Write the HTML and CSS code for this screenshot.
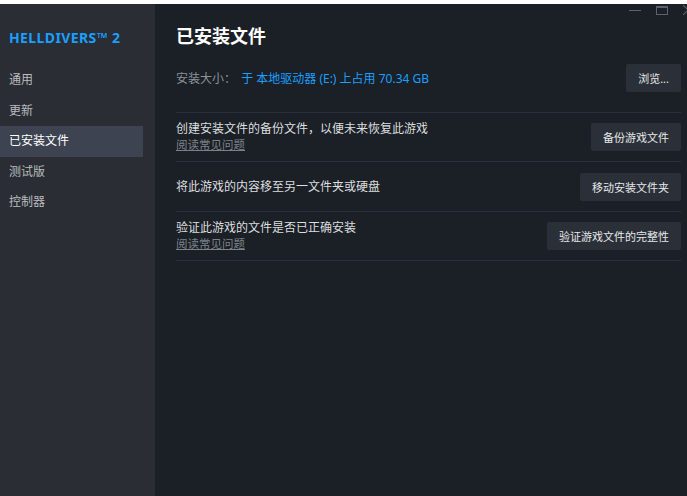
FILE: index.html
```html
<!DOCTYPE html>
<html lang="zh-CN">
<head>
    <meta charset="UTF-8">
    <title>HELLDIVERS™ 2 - 属性</title>
    <link rel="stylesheet" href="styles.css">
</head>
<body>
    <div class="topline"></div>
    <div class="window">
        <div class="sidebar">
            <h2 class="game-title">HELLDIVERS™ 2</h2>
            <ul class="nav">
                <li>通用</li>
                <li>更新</li>
                <li class="active">已安装文件</li>
                <li>测试版</li>
                <li>控制器</li>
            </ul>
        </div>
        <div class="main">
            <div class="controls">
                <span class="ctl-min"></span>
                <span class="ctl-max"></span>
                <svg class="ctl-close" width="4" height="10" viewBox="0 0 4 10">
                    <path d="M0 0 L10 10 M10 0 L0 10" stroke="#5d626b" stroke-width="1.2"/>
                </svg>
            </div>
            <h1>已安装文件</h1>
            <div class="size-row">
                <div class="size-text">
                    <span class="label">安装大小：</span>
                    <span class="value">于 本地驱动器 (E:) 上占用 70.34 GB</span>
                </div>
                <button class="btn">浏览...</button>
            </div>
            <div class="row">
                <div class="row-text">
                    <p>创建安装文件的备份文件，以便未来恢复此游戏</p>
                    <a class="faq">阅读常见问题</a>
                </div>
                <button class="btn">备份游戏文件</button>
            </div>
            <div class="row">
                <div class="row-text">
                    <p>将此游戏的内容移至另一文件夹或硬盘</p>
                </div>
                <button class="btn">移动安装文件夹</button>
            </div>
            <div class="row">
                <div class="row-text">
                    <p>验证此游戏的文件是否已正确安装</p>
                    <a class="faq">阅读常见问题</a>
                </div>
                <button class="btn">验证游戏文件的完整性</button>
            </div>
        </div>
    </div>
</body>
</html>
```

FILE: styles.css
```css
* {
    margin: 0;
    padding: 0;
    box-sizing: border-box;
}
html, body {
    height: 100%;
}
body {
    font-family: "Noto Sans", "Noto Sans CJK SC", sans-serif;
    background: #1b1f26;
    color: #dcdedf;
    display: flex;
    flex-direction: column;
    overflow: hidden;
}
.topline {
    height: 4px;
    background: #ffffff;
}
.window {
    flex: 1;
    display: flex;
}
.sidebar {
    width: 155px;
    background: #2a2d34;
    padding-top: 25px;
}
.game-title {
    font-size: 14px;
    font-weight: 700;
    color: #1a9fff;
    padding-left: 9px;
    letter-spacing: 0.4px;
    line-height: 18px;
}
.nav {
    list-style: none;
    margin-top: 18px;
    width: 143px;
}
.nav li {
    font-size: 12px;
    color: #b8bcbf;
    height: 30.5px;
    line-height: 30px;
    padding-left: 9px;
}
.nav li.active {
    background: #3d4350;
    color: #ffffff;
}
.main {
    flex: 1;
    position: relative;
    padding: 19px 6px 0 21px;
}
.controls {
    position: absolute;
    top: 1px;
    right: 0;
    display: flex;
    align-items: center;
    gap: 15px;
}
.ctl-min {
    width: 12px;
    height: 1px;
    background: #5d626b;
}
.ctl-max {
    width: 12px;
    height: 9px;
    border: 1px solid #5d626b;
    border-top-width: 2px;
}
h1 {
    font-size: 18px;
    font-weight: 700;
    color: #ffffff;
    line-height: 26px;
}
.size-row {
    display: flex;
    justify-content: space-between;
    align-items: center;
    margin-top: 15px;
    padding-bottom: 20px;
    border-bottom: 1px solid #2c3139;
}
.size-text {
    font-size: 12px;
}
.label {
    color: #8b929a;
    margin-right: 2px;
}
.value {
    color: #1a9fff;
}
.btn {
    font-family: "Noto Sans", "Noto Sans CJK SC", sans-serif;
    font-size: 11px;
    color: #e6e8ea;
    background: #2b3038;
    border: none;
    border-radius: 2px;
    height: 28px;
    padding: 0 12px;
}
.row {
    display: flex;
    justify-content: space-between;
    align-items: center;
    height: 49.4px;
    border-bottom: 1px solid #2c3139;
}
.row-text p {
    font-size: 12px;
    color: #dcdedf;
    line-height: 16px;
}
.faq {
    display: block;
    font-size: 11.5px;
    color: #7d8289;
    text-decoration: underline;
    line-height: 16px;
}
```
